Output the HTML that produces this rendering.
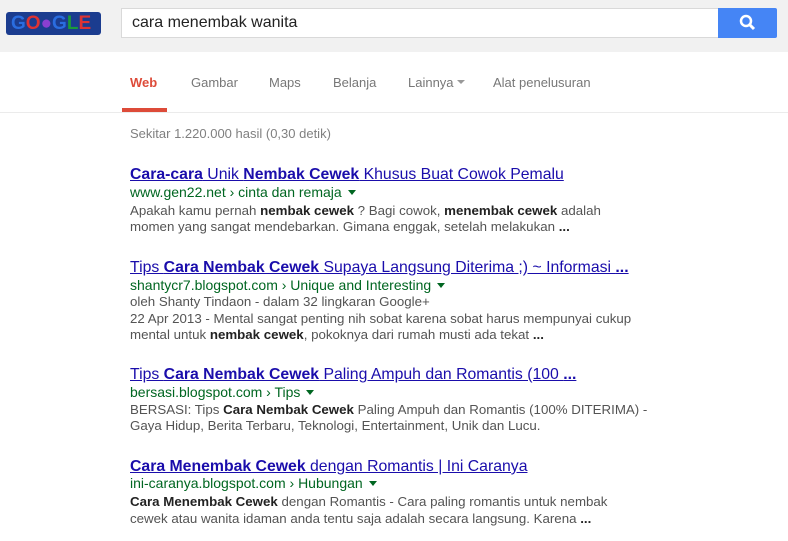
<!DOCTYPE html>
<html><head><meta charset="utf-8"><style>
*{margin:0;padding:0;box-sizing:border-box}
body{width:788px;height:541px;background:#fff;font-family:"Liberation Sans",Arial,sans-serif;position:relative;overflow:hidden}
.hdr{position:absolute;left:0;top:0;width:788px;height:52px;background:#f1f1f1}
.logo{position:absolute;left:6px;top:12px;width:95px;height:23px;background:#1b3c8f;border-radius:3px;font-weight:bold;font-size:19px;line-height:23px;letter-spacing:0;padding-left:5px;overflow:hidden;white-space:nowrap}
.sb{position:absolute;left:121px;top:8px;width:598px;height:30px;background:#fff;border:1px solid #d9d9d9;font-size:16px;line-height:28px;padding-left:10px;color:#222}
.btn{position:absolute;left:718px;top:8px;width:59px;height:30px;background:#4585f5;border-radius:0 2px 2px 0}
.t{position:absolute;font-size:13px;color:#777;top:75px}
.abs{position:absolute;left:130px;white-space:nowrap}
.ti{font-size:15.8px;color:#1a0dab;text-decoration:underline}
.u{font-size:14px;color:#006621}
.s{font-size:13.3px;color:#545454}
b{color:#222}
.ti b{color:#1a0dab}
.ar{display:inline-block;width:0;height:0;border-left:4px solid transparent;border-right:4px solid transparent;border-top:5px solid #006621;margin-left:6px;vertical-align:2px}
</style></head><body>
<div class="hdr"></div>
<div class="logo"><span style="color:#2a6de0">G</span><span style="color:#d33">O</span><span style="color:#8a3fd0">●</span><span style="color:#2a6de0">G</span><span style="color:#1a9a3a">L</span><span style="color:#d33">E</span></div>
<div class="sb">cara menembak wanita</div>
<div class="btn"><svg width="59" height="30"><circle cx="28" cy="13" r="5" fill="none" stroke="#fff" stroke-width="2.5"/><line x1="31.5" y1="16.5" x2="36" y2="21" stroke="#fff" stroke-width="3"/></svg></div>
<div class="t" style="left:130px;color:#dd4b39;font-weight:bold">Web</div>
<div style="position:absolute;left:122px;top:108px;width:45px;height:4px;background:#dd4b39"></div>
<div class="t" style="left:191px">Gambar</div>
<div class="t" style="left:269px">Maps</div>
<div class="t" style="left:333px">Belanja</div>
<div class="t" style="left:408px">Lainnya <span style="display:inline-block;border-left:4px solid transparent;border-right:4px solid transparent;border-top:4px solid #999;vertical-align:3px"></span></div>
<div class="t" style="left:493px">Alat penelusuran</div>
<div style="position:absolute;left:0;top:112px;width:788px;height:1px;background:#ebebeb"></div>
<div class="abs" style="top:126px;font-size:13px;color:#808080">Sekitar 1.220.000 hasil (0,30 detik)</div>

<div class="abs ti" style="top:166px"><b>Cara-cara</b> Unik <b>Nembak Cewek</b> Khusus Buat Cowok Pemalu</div>
<div class="abs u" style="top:184px">www.gen22.net › cinta dan remaja<span class="ar"></span></div>
<div class="abs s" style="top:203px">Apakah kamu pernah <b>nembak cewek</b> ? Bagi cowok, <b>menembak cewek</b> adalah</div>
<div class="abs s" style="top:219px">momen yang sangat mendebarkan. Gimana enggak, setelah melakukan <b>...</b></div>

<div class="abs ti" style="top:259px">Tips <b>Cara Nembak Cewek</b> Supaya Langsung Diterima ;) ~ Informasi <b>...</b></div>
<div class="abs u" style="top:277px">shantycr7.blogspot.com › Unique and Interesting<span class="ar"></span></div>
<div class="abs s" style="top:294px">oleh Shanty Tindaon - dalam 32 lingkaran Google+</div>
<div class="abs s" style="top:311px">22 Apr 2013 - Mental sangat penting nih sobat karena sobat harus mempunyai cukup</div>
<div class="abs s" style="top:327px">mental untuk <b>nembak cewek</b>, pokoknya dari rumah musti ada tekat <b>...</b></div>

<div class="abs ti" style="top:366px">Tips <b>Cara Nembak Cewek</b> Paling Ampuh dan Romantis (100 <b>...</b></div>
<div class="abs u" style="top:384px">bersasi.blogspot.com › Tips<span class="ar"></span></div>
<div class="abs s" style="top:402px">BERSASI: Tips <b>Cara Nembak Cewek</b> Paling Ampuh dan Romantis (100% DITERIMA) -</div>
<div class="abs s" style="top:418px">Gaya Hidup, Berita Terbaru, Teknologi, Entertainment, Unik dan Lucu.</div>

<div class="abs ti" style="top:458px"><b>Cara Menembak Cewek</b> dengan Romantis | Ini Caranya</div>
<div class="abs u" style="top:475px">ini-caranya.blogspot.com › Hubungan<span class="ar"></span></div>
<div class="abs s" style="top:494px"><b>Cara Menembak Cewek</b> dengan Romantis - Cara paling romantis untuk nembak</div>
<div class="abs s" style="top:511px">cewek atau wanita idaman anda tentu saja adalah secara langsung. Karena <b>...</b></div>
</body></html>
